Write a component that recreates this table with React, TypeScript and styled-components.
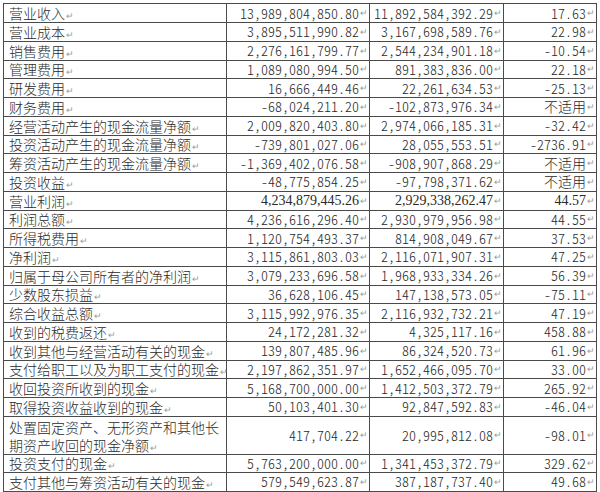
import styled, {createGlobalStyle} from "styled-components";

type Row = {
    label: string;
    current: string;
    previous: string;
    change: string;
    tall?: boolean;
    alt?: boolean;
};

const rows: Row[] = [
    {label: "营业收入", current: "13,989,804,850.80", previous: "11,892,584,392.29", change: "17.63"},
    {label: "营业成本", current: "3,895,511,990.82", previous: "3,167,698,589.76", change: "22.98"},
    {label: "销售费用", current: "2,276,161,799.77", previous: "2,544,234,901.18", change: "-10.54"},
    {label: "管理费用", current: "1,089,080,994.50", previous: "891,383,836.00", change: "22.18"},
    {label: "研发费用", current: "16,666,449.46", previous: "22,261,634.53", change: "-25.13"},
    {label: "财务费用", current: "-68,024,211.20", previous: "-102,873,976.34", change: "不适用"},
    {label: "经营活动产生的现金流量净额", current: "2,009,820,403.80", previous: "2,974,066,185.31", change: "-32.42"},
    {label: "投资活动产生的现金流量净额", current: "-739,801,027.06", previous: "28,055,553.51", change: "-2736.91"},
    {label: "筹资活动产生的现金流量净额", current: "-1,369,402,076.58", previous: "-908,907,868.29", change: "不适用"},
    {label: "投资收益", current: "-48,775,854.25", previous: "-97,798,371.62", change: "不适用"},
    {label: "营业利润", current: "4,234,879,445.26", previous: "2,929,338,262.47", change: "44.57", alt: true},
    {label: "利润总额", current: "4,236,616,296.40", previous: "2,930,979,956.98", change: "44.55"},
    {label: "所得税费用", current: "1,120,754,493.37", previous: "814,908,049.67", change: "37.53"},
    {label: "净利润", current: "3,115,861,803.03", previous: "2,116,071,907.31", change: "47.25"},
    {label: "归属于母公司所有者的净利润", current: "3,079,233,696.58", previous: "1,968,933,334.26", change: "56.39"},
    {label: "少数股东损益", current: "36,628,106.45", previous: "147,138,573.05", change: "-75.11"},
    {label: "综合收益总额", current: "3,115,992,976.35", previous: "2,116,932,732.21", change: "47.19"},
    {label: "收到的税费返还", current: "24,172,281.32", previous: "4,325,117.16", change: "458.88"},
    {label: "收到其他与经营活动有关的现金", current: "139,807,485.96", previous: "86,324,520.73", change: "61.96"},
    {label: "支付给职工以及为职工支付的现金", current: "2,197,862,351.97", previous: "1,652,466,095.70", change: "33.00"},
    {label: "收回投资所收到的现金", current: "5,168,700,000.00", previous: "1,412,503,372.79", change: "265.92"},
    {label: "取得投资收益收到的现金", current: "50,103,401.30", previous: "92,847,592.83", change: "-46.04"},
    {label: "处置固定资产、无形资产和其他长\n期资产收回的现金净额", current: "417,704.22", previous: "20,995,812.08", change: "-98.01", tall: true},
    {label: "投资支付的现金", current: "5,763,200,000.00", previous: "1,341,453,372.79", change: "329.62"},
    {label: "支付其他与筹资活动有关的现金", current: "579,549,623.87", previous: "387,187,737.40", change: "49.68"},
];

const isText = (v: string) => /[^\d.,\-]/.test(v);

function App() {
    return (
        <Page>
            <GlobalStyle />
            <Grid>
                {rows.map(r => (
                    <Line key={r.label} $tall={r.tall}>
                        <Label $tall={r.tall}>
                            {r.label.split("\n").map((text, i, all) => (
                                <LabelLine key={i}>
                                    {text}
                                    {i === all.length - 1 && <Mark>↵</Mark>}
                                </LabelLine>
                            ))}
                        </Label>
                        {[r.current, r.previous, r.change].map((v, i) => (
                            <Num key={i} $alt={r.alt} $cjk={isText(v)}>
                                {v}<Mark>↵</Mark>
                            </Num>
                        ))}
                    </Line>
                ))}
            </Grid>
        </Page>
    );
}

export default App;

const GlobalStyle = createGlobalStyle`
    html, body {
        margin: 0;
        padding: 0;
        background: #fff;
    }
`

const Page = styled.div`
    width: 600px;
    height: 492px;
    padding: 3px 0 0 3px;
    box-sizing: border-box;
    overflow: hidden;
    font-family: "Noto Sans CJK SC", sans-serif;
    color: #2a2a2a;
`

const Grid = styled.div`
    display: flex;
    flex-direction: column;
    width: 594px;
    border-top: 1px solid #4a4a4a;
    border-left: 1px solid #4a4a4a;
    box-sizing: border-box;
`

const Line = styled.div<{ $tall?: boolean }>`
    display: grid;
    grid-template-columns: 223px 143px 134px 93px;
    height: ${p => (p.$tall ? "37.5px" : "18.75px")};
`

const Cell = styled.div`
    display: flex;
    align-items: center;
    box-sizing: border-box;
    border-right: 1px solid #4a4a4a;
    border-bottom: 1px solid #4a4a4a;
    font-size: 14px;
    line-height: 17px;
    font-weight: 300;
    white-space: nowrap;
`

const Label = styled(Cell)<{ $tall?: boolean }>`
    flex-direction: column;
    align-items: flex-start;
    justify-content: ${p => (p.$tall ? "flex-start" : "center")};
    padding: ${p => (p.$tall ? "1px 0 0 5px" : "0 0 0 5px")};
`

const LabelLine = styled.div`
    line-height: 18px;
`

const Num = styled(Cell)<{ $alt?: boolean; $cjk?: boolean }>`
    justify-content: flex-end;
    padding-right: 1px;
    font-family: ${p => (p.$alt ? '"Liberation Serif", serif' : '"Noto Sans CJK SC", sans-serif')};
    font-feature-settings: ${p => (p.$alt || p.$cjk ? "normal" : '"hwid"')};
`

const Mark = styled.span`
    font-family: "DejaVu Sans", sans-serif;
    font-size: 9px;
    line-height: 10px;
    color: #9a9a9a;
    margin-left: 1px;
`
